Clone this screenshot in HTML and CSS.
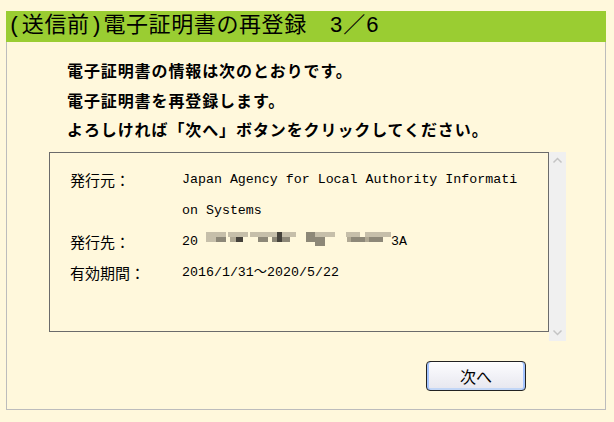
FILE: index.html
```html
<!DOCTYPE html>
<html lang="ja">
<head>
<meta charset="utf-8">
<title>電子証明書の再登録</title>
<link rel="stylesheet" href="styles.css">
</head>
<body>
<div class="panel">
  <div class="title">(送信前)電子証明書の再登録　3／6</div>
  <div class="body">
    <div class="msg">
      <p>電子証明書の情報は次のとおりです。</p>
      <p>電子証明書を再登録します。</p>
      <p>よろしければ「次へ」ボタンをクリックしてください。</p>
    </div>
    <div class="viewer">
      <div class="box">
        <div class="row"><span class="label">発行元：</span><span class="value">Japan Agency for Local Authority Information Systems</span></div>
        <div class="row"><span class="label">発行先：</span><span class="value">20 <svg class="mask" width="185" height="15" viewBox="0 0 185 15"><rect x="0" y="0" width="20" height="5" fill="#c6bfaa"/><rect x="0" y="5" width="10" height="5" fill="#c6bfaa"/><rect x="10" y="5" width="10" height="5" fill="#8d8878"/><rect x="22" y="0" width="20" height="5" fill="#c6bfaa"/><rect x="30" y="5" width="7" height="5" fill="#45423b"/><rect x="24" y="5" width="6" height="5" fill="#b0a994"/><rect x="44" y="0" width="20" height="5" fill="#c6bfaa"/><rect x="52" y="5" width="10" height="5" fill="#8d8878"/><rect x="64" y="0" width="26" height="5" fill="#c6bfaa"/><rect x="66" y="5" width="18" height="5" fill="#8d8878"/><rect x="71" y="0" width="5" height="10" fill="#45423b"/><rect x="100" y="0" width="9" height="10" fill="#8d8878"/><rect x="109" y="0" width="20" height="5" fill="#c6bfaa"/><rect x="109" y="5" width="10" height="9" fill="#8d8878"/><rect x="140" y="0" width="14" height="5" fill="#c6bfaa"/><rect x="145" y="5" width="14" height="5" fill="#8d8878"/><rect x="159" y="0" width="26" height="5" fill="#c6bfaa"/><rect x="163" y="5" width="14" height="5" fill="#8d8878"/><rect x="141" y="5" width="4" height="5" fill="#b0a994"/><rect x="159" y="5" width="4" height="5" fill="#b0a994"/></svg>3A</span></div>
        <div class="row"><span class="label">有効期間：</span><span class="value">2016/1/31～2020/5/22</span></div>
      </div>
      <div class="scroll">
        <svg width="17" height="17" viewBox="0 0 17 17"><path d="M4.5 10.5 L8.5 6.5 L12.5 10.5" fill="none" stroke="#c4c4c4" stroke-width="1.5"/></svg>
        <svg width="17" height="17" viewBox="0 0 17 17"><path d="M4.5 6.5 L8.5 10.5 L12.5 6.5" fill="none" stroke="#c4c4c4" stroke-width="1.5"/></svg>
      </div>
    </div>
    <div class="actions">
      <button class="btn" type="button">次へ</button>
    </div>
  </div>
</div>
</body>
</html>
```

FILE: styles.css
```css
html, body {
  margin: 0;
  padding: 0;
  background: #fff8dc;
}

body {
  font-family: "Noto Sans CJK JP", "Noto Sans", sans-serif;
  color: #000;
}

.panel {
  width: 600px;
  margin: 11px 0 0 6px;
}

.title {
  height: 31px;
  line-height: 31px;
  background: #9acd32;
  font-family: "Liberation Mono", "Noto Sans CJK JP", monospace;
  font-size: 22px;
  letter-spacing: 0.6px;
  padding-left: 2px;
  white-space: nowrap;
}

.body {
  border: 1px solid #bcbcbc;
  border-top: none;
  padding: 14px 0 18px 0;
}

.msg {
  padding-left: 60px;
}

.msg p {
  margin: 0;
  font-size: 16px;
  font-weight: 700;
  letter-spacing: 0.9px;
  line-height: 29.5px;
}

.viewer {
  display: flex;
  margin: 7px 0 0 42px;
}

.box {
  width: 478px;
  height: 167px;
  border: 1px solid #6b6b6b;
  padding: 11px 0 0 20px;
}

.row {
  display: flex;
  align-items: flex-start;
}

.label {
  flex: 0 0 112px;
  font-size: 15px;
  line-height: 31px;
}

.value {
  font-family: "Liberation Mono", "Noto Sans CJK JP", monospace;
  font-size: 13.3px;
  line-height: 31px;
  width: 42ch;
  word-break: break-all;
}

.mask {
  vertical-align: -2px;
}

.scroll {
  width: 17px;
  height: 189px;
  background: #f0f0f0;
  display: flex;
  flex-direction: column;
  justify-content: space-between;
}

.scroll svg {
  display: block;
}

.actions {
  display: flex;
  justify-content: flex-end;
  padding-right: 79px;
  margin-top: 20px;
}

.btn {
  width: 100px;
  height: 30px;
  border: 1px solid #222;
  border-radius: 4px;
  background: linear-gradient(#fdfdff, #e6e6ee);
  box-shadow: inset 2px 0 #a4c4ff, inset -2px 0 #a4c4ff, inset 0 -2px #c2d6f6, inset 0 1px #fff;
  font-family: "Noto Sans CJK JP", sans-serif;
  font-size: 16px;
  color: #000;
  padding: 0;
  line-height: 28px;
}
```
